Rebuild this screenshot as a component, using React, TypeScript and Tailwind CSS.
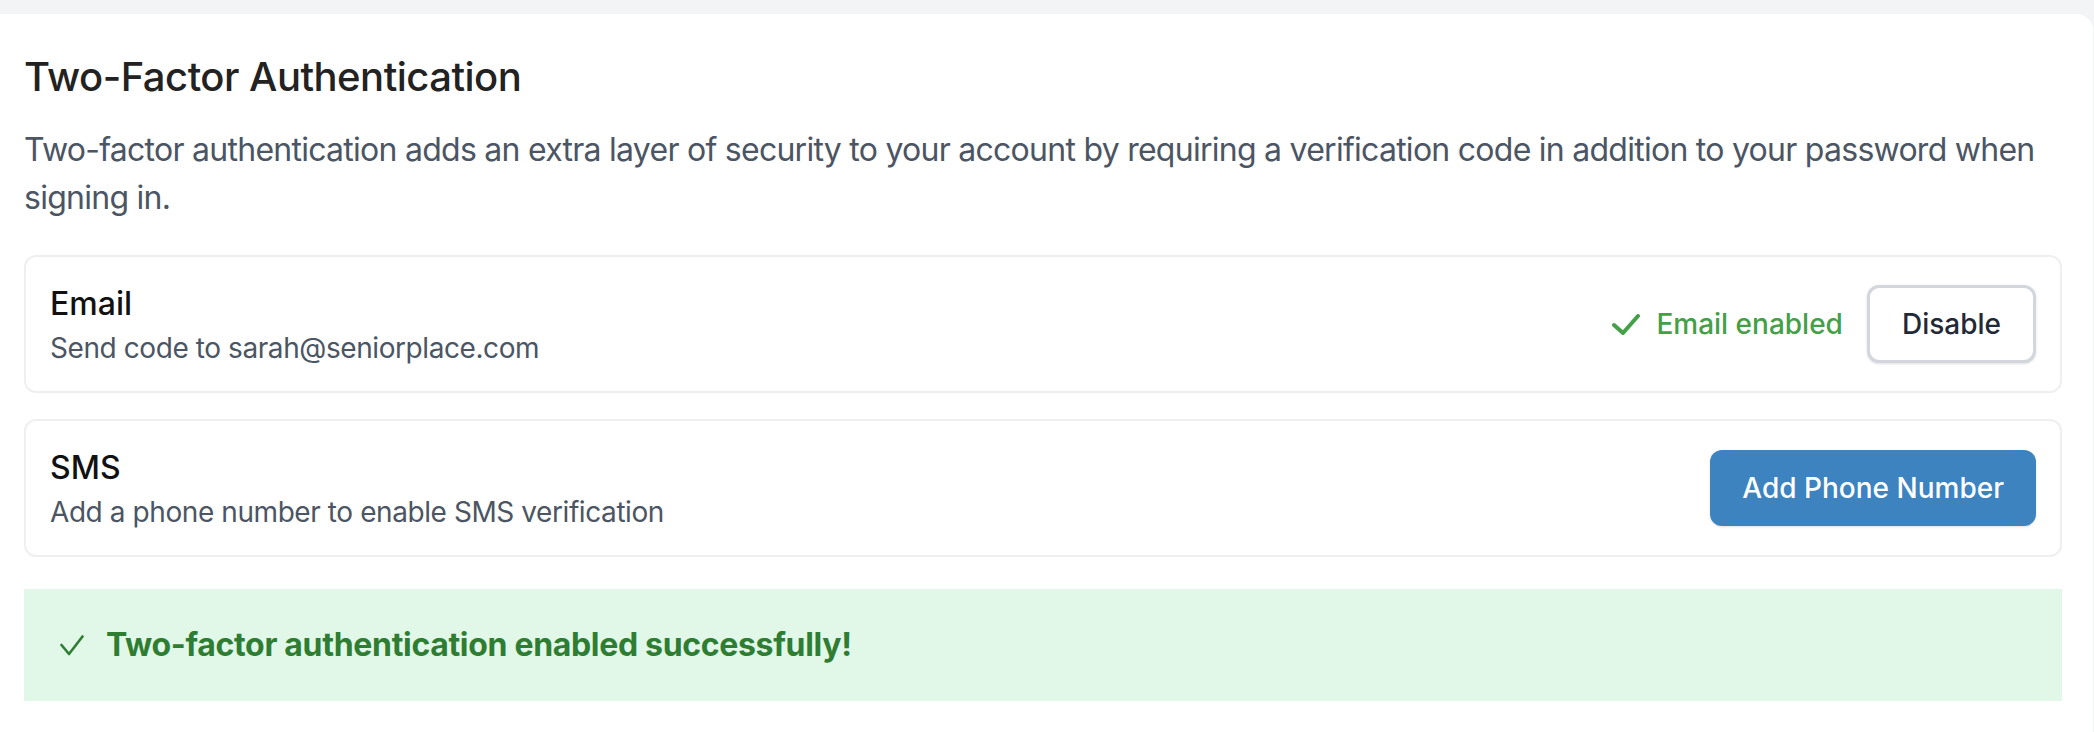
import React from "react";

function BoldCheck() {
  return (
    <svg width="28" height="21" viewBox="0 0 28 21" fill="none" aria-hidden="true">
      <polyline points="2,11 11,19 26,2" stroke="#43a047" strokeWidth="4" strokeLinecap="round" strokeLinejoin="round" />
    </svg>
  );
}

function ThinCheck() {
  return (
    <svg width="24" height="21" viewBox="0 0 24 21" fill="none" aria-hidden="true">
      <polyline points="1.5,10 9,19 22.5,1.5" stroke="#2e7d32" strokeWidth="2.6" strokeLinecap="round" strokeLinejoin="round" />
    </svg>
  );
}

export default function App() {
  return (
    <div className="flex min-h-screen flex-col bg-[#f3f4f6] pt-[14px] font-['Inter',sans-serif]">
      <div className="mr-px flex-1 rounded-tr-2xl bg-white pb-[40px] pl-6 pr-[31px] pt-[35px]">
        <h2 className="text-[40px] font-medium leading-[56px] tracking-[-0.013em] text-[#222222]">Two-Factor Authentication</h2>
        <p className="mt-[21px] text-[32px] leading-[48px] tracking-[-0.023em] text-[#4b5563]">
          Two-factor authentication adds an extra layer of security to your account by requiring a verification code in addition to your password when signing in.
        </p>

        <div className="mt-[33px] flex flex-col gap-[26px]">
          <div className="flex items-center justify-between rounded-xl border-2 border-[#efefef] px-6 py-[23px]">
            <div className="flex flex-col">
              <span className="text-[32px] font-medium leading-[48px] text-[#111111]">Email</span>
              <span className="text-[28px] leading-[40px] tracking-[-0.015em] text-[#4b5563]">Send code to sarah@seniorplace.com</span>
            </div>
            <div className="flex items-center gap-6">
              <div className="flex items-center gap-4">
                <BoldCheck />
                <span className="text-[28px] font-medium leading-[40px] text-[#43a047]">Email enabled</span>
              </div>
              <button className="rounded-xl border-[3px] border-[#d3d6dd] bg-white px-8 py-4 text-[28px] font-medium leading-[40px] text-[#1f2937] shadow-sm">
                Disable
              </button>
            </div>
          </div>

          <div className="flex items-center justify-between rounded-xl border-2 border-[#efefef] px-6 py-[23px]">
            <div className="flex flex-col">
              <span className="text-[32px] font-medium leading-[48px] text-[#111111]">SMS</span>
              <span className="text-[28px] leading-[40px] tracking-[-0.015em] text-[#4b5563]">Add a phone number to enable SMS verification</span>
            </div>
            <button className="rounded-xl border-2 border-transparent bg-[#3c83c0] px-[30px] py-4 text-[28px] font-medium leading-[40px] text-white shadow-sm">
              Add Phone Number
            </button>
          </div>
        </div>

        <div className="mt-8 flex items-center gap-[22px] bg-[#e1f8e9] py-8 pl-[36px] pr-8">
          <ThinCheck />
          <span className="text-[32px] font-bold leading-[48px] tracking-[-0.01em] text-[#2e7d32]">Two-factor authentication enabled successfully!</span>
        </div>
      </div>
    </div>
  );
}
